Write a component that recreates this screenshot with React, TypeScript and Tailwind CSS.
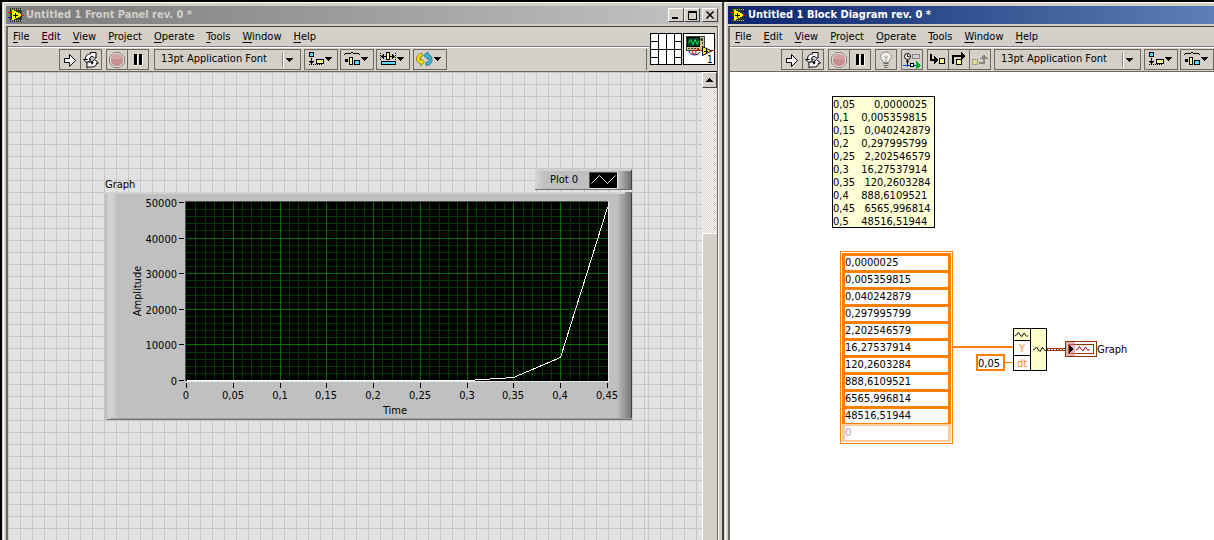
import type { ReactNode } from "react"
import { clsx } from "clsx"

const MENU_ITEMS = ["File", "Edit", "View", "Project", "Operate", "Tools", "Window", "Help"]

const NOTE_LINES = [
  "0,05      0,0000025",
  "0,1    0,005359815",
  "0,15   0,040242879",
  "0,2    0,297995799",
  "0,25   2,202546579",
  "0,3    16,27537914",
  "0,35   120,2603284",
  "0,4    888,6109521",
  "0,45   6565,996814",
  "0,5    48516,51944",
]

const SAMPLES = [
  "0,0000025",
  "0,005359815",
  "0,040242879",
  "0,297995799",
  "2,202546579",
  "16,27537914",
  "120,2603284",
  "888,6109521",
  "6565,996814",
  "48516,51944",
]

const X_LABELS = ["0", "0,05", "0,1", "0,15", "0,2", "0,25", "0,3", "0,35", "0,4", "0,45"]
const Y_LABELS = ["0", "10000", "20000", "30000", "40000", "50000"]

/* ---------- icons ---------- */

function Icon({ w = 20, h = 20, children }: { w?: number; h?: number; children: ReactNode }) {
  return (
    <svg width={w} height={h} viewBox={`0 0 ${w} ${h}`} shapeRendering="crispEdges" className="block shrink-0" aria-hidden="true">
      {children}
    </svg>
  )
}

const DropArrow = () => <path d="M20 7h7v1h-1v1h-1v1h-1v1h-1v-1h-1v-1h-1v-1h-1z" fill="#000" />

function AppIcon() {
  return (
    <Icon w={16} h={14}>
      <rect x="2" y="1" width="12" height="12" fill="#303828" />
      <path d="M2 .5h12M2 13.5h12" stroke="#202018" strokeDasharray="1 1" />
      <path d="M3 1.5h11M3 12.5h11" stroke="#b8b8a8" strokeDasharray="1 1" />
      <path d="M0 4.500h4M12 7.500h4" stroke="#f00" />
      <path d="M0 9.500h4" stroke="#00f" />
      <path d="M4 2h2v1h2v1h2v1h2v1h1v2h-1v1h-2v1H8v1H6v1H4z" fill="#ff0" />
      <path d="M5 7.500h5M7.500 5v5" stroke="#000" />
    </Icon>
  )
}

function RunIcon() {
  return (
    <Icon>
      <path d="M4.500 8.500h5v-4l6 6-6 6v-4h-5z" fill="#fff" stroke="#000" shapeRendering="geometricPrecision" />
    </Icon>
  )
}

function RunContinuousIcon() {
  return (
    <Icon>
      <g fill="#fff" stroke="#000" shapeRendering="geometricPrecision">
        <path d="M6.500 9.500H4.500c0-4 2-5.500 5-5.500V2.500h5.500v5.500h-1.500L12 6.500c-3 0-3.500 1-3.500 3h1.500L6.500 13 2.500 9.500z" />
        <path d="M13.500 9.500l4 3.500h-2c0 3-2 4-5 4h-3L6 18v-6h6l-1.500 2c1 0 1.500-.500 1.500-1.500h-2z" />
      </g>
    </Icon>
  )
}

function AbortIcon() {
  return (
    <Icon>
      <g shapeRendering="geometricPrecision">
        <path d="M7 2.500h6l4.500 4.500v6L13 17.500H7L2.500 13V7z" fill="#e0dcd6" stroke="#8c8484" />
        <path d="M7.500 4h5L16 7.500v5L12.500 16h-5L4 12.500v-5z" fill="#c98f90" />
        <path d="M7.500 4h5L16 7.500V9H4V7.500z" fill="#d6a3a4" />
      </g>
    </Icon>
  )
}

function PauseIcon() {
  return (
    <Icon>
      <path d="M7 5h3v11H7zM12 5h3v11h-3z" fill="#fff" />
      <path d="M6 4h3v11H6zM11 4h3v11h-3z" fill="#000" />
    </Icon>
  )
}

function BulbIcon() {
  return (
    <Icon>
      <g shapeRendering="geometricPrecision">
        <path d="M7.500 12.500c0-2-3-3-3-6a5.500 4.500 0 0 1 11 0c0 3-3 4-3 6z" fill="#f0eeea" stroke="#888" />
        <path d="M8 6l2 2 2-2M10 8v4" fill="none" stroke="#999" />
        <path d="M7.500 13.500h5M7.500 15.500h5M8.500 17.500h3" stroke="#666" />
      </g>
    </Icon>
  )
}

function RetainIcon() {
  return (
    <Icon>
      <path d="M1 15.500h18" stroke="#0040ff" />
      <g shapeRendering="geometricPrecision">
        <circle cx="5.500" cy="6.500" r="3" fill="#fff" stroke="#000" />
        <path d="M5.500 4.500v2h2M5.500 9.500v7" fill="none" stroke="#000" />
        <circle cx="5.500" cy="11.500" r="1.200" fill="#000" />
      </g>
      <rect x="10.500" y="4.500" width="7" height="4" fill="#d0d0d0" stroke="#888" />
      <rect x="8.500" y="13.500" width="3" height="3" fill="#fff" stroke="#000" />
      <path d="M14 11l5 4.500-5 4z" fill="#00b020" />
    </Icon>
  )
}

function StepIntoIcon() {
  return (
    <Icon>
      <path d="M3 4v6h5" fill="none" stroke="#000" strokeWidth="2" />
      <path d="M6 6l4 4-4 4z" fill="#000" />
      <rect x="11.500" y="8.500" width="5" height="5" fill="#ffff90" stroke="#000" />
    </Icon>
  )
}

function StepOverIcon() {
  return (
    <Icon>
      <path d="M4 14V6h9" fill="none" stroke="#000" strokeWidth="2" />
      <path d="M12 2l5 4-5 4z" fill="#000" />
      <rect x="7.500" y="9.500" width="5" height="5" fill="#ffff90" stroke="#000" />
    </Icon>
  )
}

function StepOutIcon() {
  return (
    <Icon>
      <rect x="2.500" y="9.500" width="5" height="5" fill="#dedb9c" stroke="#a8a484" />
      <path d="M9 13h5V8" fill="none" stroke="#8c8880" strokeWidth="2" />
      <path d="M10 9l4-5 4 5z" fill="#8c8880" />
    </Icon>
  )
}

function AlignIcon() {
  return (
    <Icon w={32}>
      <rect x="4.500" y="2.500" width="4" height="4" fill="#5fd8ff" stroke="#000" />
      <path d="M6 8h1v3h2v1h-1v1h-1v1h-1v-1h-1v-1h-1v-1h2z" fill="#000" />
      <path d="M4 14.500h14" stroke="#000" strokeDasharray="1 1" />
      <rect x="11.500" y="9.500" width="7" height="4" fill="#ffff90" stroke="#000" />
      <DropArrow />
    </Icon>
  )
}

function DistributeIcon() {
  return (
    <Icon w={32}>
      <path d="M3 4h1v1H3zM4 3h6v1H4zM10 2h1v1h-1zM11 2h1v1h-1zM12 3h6v1h-6zM18 4h1v1h-1z" fill="#000" />
      <rect x="4" y="9" width="3" height="3" fill="#000" />
      <rect x="8.500" y="7.500" width="3" height="7" fill="#ffff90" stroke="#000" />
      <rect x="13.500" y="10.500" width="5" height="4" fill="#5fd8ff" stroke="#000" />
      <DropArrow />
    </Icon>
  )
}

function ResizeIcon() {
  return (
    <Icon w={32}>
      <path d="M3.500 3v8M18.500 3v8" stroke="#000" strokeDasharray="1 1" />
      <path d="M4 6h1v-1h1v-1h1v2h2v1H7v2H6V8H5V7H4zM18 6h-1V5h-1V4h-1v2h-2v1h2v2h1V8h1V7h1z" fill="#000" />
      <rect x="9.500" y="2.500" width="3" height="7" fill="#ffff90" stroke="#000" />
      <rect x="4.500" y="11.500" width="14" height="3" fill="#5fd8ff" stroke="#000" />
      <DropArrow />
    </Icon>
  )
}

function ReorderIcon() {
  return (
    <Icon w={32}>
      <g shapeRendering="geometricPrecision" strokeWidth=".8">
        <path d="M8 3.500C4 3.500 2.500 6 2.500 9c0 2.500 1.500 4 4 4.500v2.500l4-4-4-3.500v2C5 9.500 5.500 6.500 8 6.500z" fill="#f0e010" stroke="#807000" />
        <path d="M12 15.500c4.500 0 6-3 6-6S16.500 5 14 4.500V2L9.500 5.500 14 9V7.500c2 1 1 5-2 5z" fill="#40b8d8" stroke="#186880" />
      </g>
      <DropArrow />
    </Icon>
  )
}

function ConnectorPane() {
  return (
    <Icon w={32} h={32}>
      <rect x=".5" y=".5" width="31" height="31" fill="#fff" stroke="#000" />
      <path d="M8.500 0v32M16.500 0v32M24.500 0v32M0 16.500h32M0 8.500h8M0 24.500h8M24 8.500h8M24 24.500h8" stroke="#000" />
    </Icon>
  )
}

function ViIcon() {
  return (
    <Icon w={32} h={32}>
      <rect x=".5" y=".5" width="31" height="31" fill="#fff" stroke="#000" />
      <rect x="3.500" y="3.500" width="18" height="14" fill="#c8c890" stroke="#404030" />
      <rect x="4.500" y="4.500" width="12" height="9" fill="#004020" stroke="#000" />
      <path d="M5.500 10l2-3.500 2.500 5 2-5 2.500 5 1.500-4" fill="none" stroke="#00f060" shapeRendering="geometricPrecision" />
      <circle cx="19" cy="6.500" r="1" fill="none" stroke="#404030" />
      <path d="M19.500 9v2M19.500 13v2M5 15.500h11" stroke="#404030" strokeDasharray="2 1" />
      <g fill="none" shapeRendering="geometricPrecision">
        <path d="M6 18c1 5 9 5 11 1" stroke="#000080" />
        <path d="M13 18c1-2 3-2 6 0M27 17.500h4" stroke="#f00" />
        <circle cx="11" cy="19" r="2" stroke="#f00" />
      </g>
      <path d="M19.500 13.500l9 4.500-9 4.500z" fill="#ff0" stroke="#000" shapeRendering="geometricPrecision" />
      <path d="M21 18h4M23 16v4" stroke="#000" />
      <text x="24" y="30" fontSize="10" fill="#000">1</text>
    </Icon>
  )
}

/* ---------- window chrome ---------- */

function CaptionButton({ label, children }: { label: string; children: ReactNode }) {
  return (
    <button
      aria-label={label}
      className="flex h-[14px] w-4 items-center justify-center border border-t-white border-r-[#404040] border-b-[#404040] border-l-white bg-[#d4d0c8]"
    >
      {children}
    </button>
  )
}

function TitleBar({ title, active, children }: { title: string; active?: boolean; children?: ReactNode }) {
  return (
    <div
      className={clsx(
        "mx-0.5 flex h-[18px] items-center overflow-hidden pr-px pl-0.5 leading-[18px] font-bold whitespace-nowrap",
        active
          ? "bg-[linear-gradient(to_right,#0a246a,#5e80b6)] text-white"
          : "bg-[linear-gradient(to_right,#808080_0%,#808080_10%,#c0c0c0_95%)] text-[#d4d0c8]"
      )}
    >
      <AppIcon />
      <h1 className="flex-1 pl-0.5">{title}</h1>
      {children}
    </div>
  )
}

function MenuBar() {
  return (
    <nav className="flex h-5 items-center gap-3 border-b border-[#808080] px-[5px]">
      {MENU_ITEMS.map((item) => (
        <button key={item} className="leading-4">
          <span className="underline underline-offset-2">{item[0]}</span>
          {item.slice(1)}
        </button>
      ))}
    </nav>
  )
}

function ToolGroup({ children }: { children: ReactNode }) {
  return <div className="flex h-[21px] shrink-0 divide-x divide-[#6c6860] border border-[#6c6860]">{children}</div>
}

function Tool({ label, disabled, children }: { label: string; disabled?: boolean; children: ReactNode }) {
  return (
    <button aria-label={label} disabled={disabled} className="flex h-[19px] items-center overflow-hidden">
      {children}
    </button>
  )
}

function FontSelect() {
  return (
    <div className="relative h-[21px] w-[147px] shrink-0 border border-[#6c6860]">
      <select aria-label="Text settings" className="block h-[18px] w-full appearance-none bg-transparent px-1.5 outline-none">
        <option>13pt Application Font</option>
      </select>
      <span className="pointer-events-none absolute top-[3px] right-[16px] h-[14px] w-0.5 border-l border-[#808080] bg-white" />
      <svg width="7" height="4" className="pointer-events-none absolute top-2 right-[7px]" shapeRendering="crispEdges">
        <path d="M0 0h7v1H6v1H5v1H4v1H3V3H2V2H1V1H0z" />
      </svg>
    </div>
  )
}

function RunTools() {
  return (
    <>
      <ToolGroup>
        <Tool label="Run"><RunIcon /></Tool>
        <Tool label="Run continuously"><RunContinuousIcon /></Tool>
      </ToolGroup>
      <ToolGroup>
        <Tool label="Abort" disabled><AbortIcon /></Tool>
        <Tool label="Pause"><PauseIcon /></Tool>
      </ToolGroup>
    </>
  )
}

function LayoutTools({ children }: { children?: ReactNode }) {
  return (
    <div className="flex gap-0.5">
      <ToolGroup><Tool label="Align objects"><AlignIcon /></Tool></ToolGroup>
      <ToolGroup><Tool label="Distribute objects"><DistributeIcon /></Tool></ToolGroup>
      {children}
    </div>
  )
}

function Toolbar({ children }: { children: ReactNode }) {
  return (
    <div className="flex h-[25px] gap-1 overflow-hidden border-t border-b border-t-white border-b-[#6c6860] pt-px pl-[51px]">
      {children}
    </div>
  )
}

function WindowFrame({ title, active, controls, header, className, children }: {
  title: string
  active?: boolean
  controls?: ReactNode
  header: ReactNode
  className?: string
  children: ReactNode
}) {
  return (
    <section className={clsx("flex min-w-0 flex-col overflow-hidden border-r-2 border-r-[#404040] bg-[#d4d0c8] pl-px", className)}>
      <div className="flex flex-1 flex-col border-t border-l border-white pt-[3px] pr-px">
        <TitleBar title={title} active={active}>{controls}</TitleBar>
        <div className="mt-0.5 mr-[3px] ml-0.5 flex flex-1 flex-col border-t border-r border-l-2 border-t-[#404040] border-r-[#6c6860] border-l-[#6c6860] shadow-[1px_0_0_#fff]">
          {header}
          {children}
        </div>
      </div>
    </section>
  )
}

/* ---------- front panel ---------- */

// plot area inside the 527x228 graph frame
const PLOT = { left: 81, top: 10, right: 502, bottom: 188 }

const plotX = (t: number) => Math.round(PLOT.left + (t * (PLOT.right - PLOT.left)) / 9)
const plotY = (v: number) => Math.round(PLOT.bottom - (v * (PLOT.bottom - PLOT.top)) / 50000)

function Graph() {
  const points = SAMPLES.map((s, i) => `${plotX(i) + 0.5},${plotY(parseFloat(s.replace(",", "."))) + 0.5}`).join(" ")
  const cols = Array.from({ length: 46 }, (_, i) => i)
  const rows = Array.from({ length: 26 }, (_, i) => i)

  return (
    <svg width="527" height="228" viewBox="0 0 527 228" shapeRendering="crispEdges" className="block" role="img" aria-label="Graph">
      <defs>
        <linearGradient id="edgeLeft">
          <stop offset="0" stopColor="#b8b8b8" />
          <stop offset=".3" stopColor="#d4d4d4" />
          <stop offset=".7" stopColor="#d0d0d0" />
          <stop offset="1" stopColor="#c0c0c0" />
        </linearGradient>
        <linearGradient id="edgeRight">
          <stop offset="0" stopColor="#c0c0c0" />
          <stop offset="1" stopColor="#707070" />
        </linearGradient>
      </defs>
      <rect width="527" height="228" fill="#c0c0c0" />
      <rect width="12" height="228" fill="url(#edgeLeft)" />
      <rect x="512" width="15" height="228" fill="url(#edgeRight)" />
      <rect width="520" height="2" fill="#d2d2d2" />
      <rect x="526" y="1" width="1" height="227" fill="#404040" />
      <rect x="6" y="226" width="521" height="1" fill="#a0a0a0" />
      <rect x="2" y="227" width="525" height="1" fill="#707070" />

      <rect x="80" y="9" width="423" height="180" fill="#000" />
      <path d="M80.500 189V9.500H503" fill="none" stroke="#505050" />
      {cols.filter((i) => i % 5).map((i) => (
        <rect key={i} x={plotX(i / 5)} y="10" width="1" height="178" fill="#003800" />
      ))}
      {rows.filter((i) => i % 5).map((i) => (
        <rect key={i} x="81" y={plotY(i * 2000)} width="422" height="1" fill="#003800" />
      ))}
      {cols.filter((i) => i % 5 === 0 && i > 0 && i < 45).map((i) => (
        <rect key={i} x={plotX(i / 5)} y="10" width="1" height="178" fill="#007000" />
      ))}
      {rows.filter((i) => i % 5 === 0 && i > 0 && i < 25).map((i) => (
        <rect key={i} x="81" y={plotY(i * 2000)} width="422" height="1" fill="#007000" />
      ))}
      <path d="M81 189.500h423M503.500 10v180" stroke="#e8e8e8" />
      <polyline points={points} fill="none" stroke="#fff" />

      {X_LABELS.map((label, i) => (
        <g key={label}>
          <rect x={plotX(i)} y="191" width="1" height="5" />
          <text x={plotX(i)} y="207" textAnchor="middle">{label}</text>
        </g>
      ))}
      {Y_LABELS.map((label, i) => (
        <g key={label}>
          <rect x="74" y={plotY(i * 10000)} width="5" height="1" />
          <text x="72" y={plotY(i * 10000) + 5} textAnchor="end">{label}</text>
        </g>
      ))}
      <text x="290" y="222" textAnchor="middle">Time</text>
      <text transform="translate(36 99) rotate(-90)" textAnchor="middle">Amplitude</text>
    </svg>
  )
}

function PlotLegend() {
  return (
    <div className="flex h-[21px] w-[97px] items-center border-t-2 border-r border-b border-t-[#d2d2d2] border-r-[#404040] border-b-[#707070] bg-[linear-gradient(to_right,#d4d4d4_0,#c0c0c0_10px,#c0c0c0_83px,#707070_96px)] pl-[15px]">
      <span className="flex-1 leading-4">Plot 0</span>
      <svg width="29" height="17" shapeRendering="crispEdges" className="mr-[13px] block" aria-hidden="true">
        <rect width="29" height="17" fill="#e8e8e8" />
        <rect width="28" height="16" fill="#505050" />
        <rect x="1" y="1" width="27" height="15" />
        <path d="M2.500 11.500l8-8 8 8 8-8" fill="none" stroke="#fff" strokeWidth=".9" shapeRendering="geometricPrecision" />
      </svg>
    </div>
  )
}

function ScrollBar() {
  return (
    <div className="flex w-[15px] shrink-0 flex-col bg-[repeating-conic-gradient(#fff_0_25%,#d4d0c8_0_50%)] bg-[size:2px_2px]">
      <button
        aria-label="Scroll up"
        className="flex h-4 items-center justify-center border border-t-white border-r-[#404040] border-b-[#404040] border-l-white bg-[#d4d0c8]"
      >
        <svg width="7" height="4" shapeRendering="crispEdges"><path d="M3 0h1v1h1v1h1v1h1v1H0V3h1V2h1V1h1z" /></svg>
      </button>
      <div className="mt-[145px] flex-1 border-t border-l border-white bg-[#d4d0c8]" />
    </div>
  )
}

function FrontPanel() {
  return (
    <WindowFrame
      title="Untitled 1 Front Panel rev. 0 *"
      controls={
        <div className="flex">
          <CaptionButton label="Minimize">
            <svg width="10" height="8"><path d="M1 6h6v2H1z" /></svg>
          </CaptionButton>
          <CaptionButton label="Maximize">
            <svg width="9" height="9" shapeRendering="crispEdges"><path d="M0 0h9v9H0zM1 2v6h7V2z" fillRule="evenodd" /></svg>
          </CaptionButton>
          <span className="w-0.5" />
          <CaptionButton label="Close">
            <svg width="8" height="8"><path d="M.5 .5l7 7M7.500 .5l-7 7" stroke="#000" strokeWidth="1.500" /></svg>
          </CaptionButton>
        </div>
      }
      header={
        <div className="flex">
          <div className="min-w-0 flex-1">
            <MenuBar />
            <Toolbar>
              <RunTools />
              <div className="flex flex-1 gap-[3px] pl-px">
                <FontSelect />
                <LayoutTools>
                  <ToolGroup><Tool label="Resize objects"><ResizeIcon /></Tool></ToolGroup>
                </LayoutTools>
                <ToolGroup><Tool label="Reorder"><ReorderIcon /></Tool></ToolGroup>
                <span className="mr-0.5 h-[21px] flex-1 border-r border-[#6c6860]" />
              </div>
            </Toolbar>
          </div>
          <div className="flex shrink-0 gap-px border-b border-black pt-1.5 pr-0.5 pl-px">
            <ConnectorPane />
            <ViIcon />
          </div>
        </div>
      }
    >
      <div className="flex flex-1">
        <div className="relative w-[640px] shrink bg-[#e2e2e2] bg-[linear-gradient(to_right,#c6c6c6_1px,transparent_1px),linear-gradient(to_bottom,#c6c6c6_1px,transparent_1px)] bg-[size:12px_12px]">
          <span className="absolute top-[106px] left-[97px] leading-[14px]">Graph</span>
          <div className="absolute top-[97px] left-[527px]"><PlotLegend /></div>
          <div className="absolute top-[120px] left-[97px]"><Graph /></div>
        </div>
        <div className="flex-1 bg-[#e2e2e2] bg-[linear-gradient(to_right,#c6c6c6_1px,transparent_1px),linear-gradient(to_bottom,#c6c6c6_1px,transparent_1px)] bg-[size:12px_12px]" />
        <ScrollBar />
      </div>
    </WindowFrame>
  )
}

/* ---------- block diagram ---------- */

function ArrayConstant() {
  return (
    <div className="w-[113px] border border-[#ff8000] bg-white p-px">
      <div className="bg-[#ff8000]">
        {SAMPLES.map((value, i) => (
          <div key={value} className="px-[3px] pt-[3px]">
            <input aria-label={`Element ${i}`} defaultValue={value} className="block h-[14px] w-full bg-white pt-px outline-none" />
          </div>
        ))}
        <div className="h-px" />
        <div className="bg-[#ffcc99] px-[3px] py-0.5">
          <input aria-label="Element 10" defaultValue="0" className="block h-[14px] w-full bg-white pt-px text-[#a0a0a0] outline-none" />
        </div>
      </div>
    </div>
  )
}

// wires, the Build Waveform node and the graph terminal
function Wiring() {
  return (
    <svg width="146" height="44" viewBox="0 0 146 44" shapeRendering="crispEdges" className="block" aria-hidden="true">
      <path d="M0 19h60" stroke="#ff8000" strokeWidth="2" />
      <rect x="51" y="34" width="9" height="1" fill="#ff8000" />
      <rect x="60.500" y=".5" width="33" height="42" fill="#ffffcc" stroke="#000" />
      <path d="M61 13h16v29H61z" fill="#fff" />
      <path d="M77.500 0v43M60 12.500h17M60 27.500h17" stroke="#000" />
      <g fill="none" stroke="#000" shapeRendering="geometricPrecision">
        <path d="M62 8l1.500-1 2-2.500 2 3 1.500 1 2-3.500 1.500 2 1.500 1.500 1-1" />
        <path d="M80 22l1.500-.5 2-2.500 2 3 1.500 1.500 2.500-4 1.500 2 1.500 1.500 1.500-1.500" />
      </g>
      <text x="69" y="24" textAnchor="middle" fill="#ff8c20">Y</text>
      <text x="69" y="39" textAnchor="middle" fill="#ff8c20">dt</text>
      <rect x="94" y="20" width="18" height="3" fill="#993300" />
      <path d="M95 21.500h17" stroke="#fff" strokeDasharray="2 1" />
      <rect x="112.500" y="13.500" width="31" height="15" fill="#fff" stroke="#993300" />
      <rect x="115.500" y="16.500" width="25" height="9" fill="#fff" stroke="#993300" />
      <rect x="113" y="14" width="9" height="14" fill="#cc8080" fillOpacity=".6" />
      <path d="M116 17l4 4-4 4z" fill="#000" />
      <path d="M123 22l2-1 1.500-2.500 2 3 1.500 1.500 2.500-4 1.500 2.500 1.500 1 1-1.500" fill="none" stroke="#a00020" shapeRendering="geometricPrecision" />
    </svg>
  )
}

function BlockDiagram() {
  return (
    <WindowFrame
      active
      title="Untitled 1 Block Diagram rev. 0 *"
      className="-mr-2"
      header={
        <>
          <MenuBar />
          <Toolbar>
            <RunTools />
            <ToolGroup><Tool label="Highlight execution"><BulbIcon /></Tool></ToolGroup>
            <ToolGroup><Tool label="Retain wire values"><RetainIcon /></Tool></ToolGroup>
            <div className="flex gap-[3px]">
              <ToolGroup>
                <Tool label="Step into"><StepIntoIcon /></Tool>
                <Tool label="Step over"><StepOverIcon /></Tool>
                <Tool label="Step out" disabled><StepOutIcon /></Tool>
              </ToolGroup>
              <FontSelect />
              <LayoutTools />
            </div>
          </Toolbar>
        </>
      }
    >
      <div className="relative flex-1 bg-white">
        <pre className="absolute top-6 left-[102px] h-[132px] w-[103px] border border-black bg-[#ffffd8] pt-px font-[inherit] leading-[13px]">
          {NOTE_LINES.join("\n")}
        </pre>
        <div className="absolute top-[179px] left-[110px]"><ArrayConstant /></div>
        <div className="absolute top-[256px] left-[223px]"><Wiring /></div>
        <input
          aria-label="dt"
          defaultValue="0,05"
          className="absolute top-[282px] left-[246px] h-[17px] w-[29px] border-2 border-[#ff8000] bg-white pt-px outline-none"
        />
        <span className="absolute top-[271px] left-[367px] leading-[14px]">Graph</span>
      </div>
    </WindowFrame>
  )
}

export default function App() {
  return (
    <main className="grid min-h-screen grid-cols-[722fr_490fr] overflow-hidden bg-black pt-0.5 pl-0.5 font-['DejaVu_Sans_Condensed',Tahoma,sans-serif] text-[11px] text-black">
      <FrontPanel />
      <BlockDiagram />
    </main>
  )
}
